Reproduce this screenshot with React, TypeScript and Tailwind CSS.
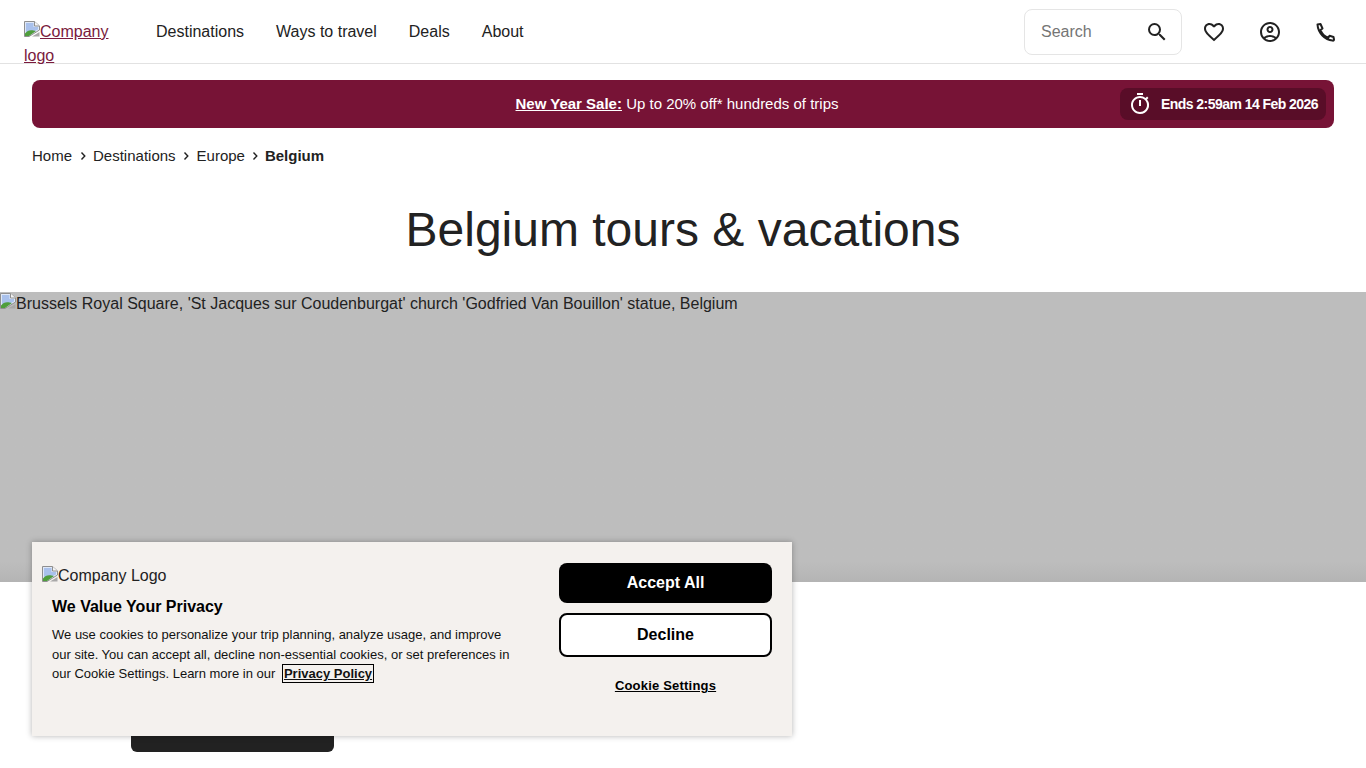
import React from "react";
import { MdOutlineSearch, MdFavoriteBorder, MdOutlineAccountCircle, MdOutlineTimer } from "react-icons/md";

const font = "font-['Liberation_Sans',Arial,sans-serif]";

function BrokenImage({ className = "align-baseline" }: { className?: string }) {
  return (
    <svg viewBox="0 0 16 16" className={`inline-block w-4 h-4 ${className}`}>
      <path d="M0.5 15.5V0.5H10.5L15.5 5V9L5 15.5Z" fill="#dfe8f7" stroke="#8f8f8f" />
      <path d="M10.5 0.5V5H15.5" fill="#f4f4f4" stroke="#8f8f8f" />
      <path d="M2 2H9.5V6H14V8.5L2 14Z" fill="#a9c1ec" />
      <path d="M1 15V12.5C3 9.5 6.5 8.5 9.5 9.5L12 10L5 15Z" fill="#4f9e3c" />
      <path d="M8 15.5L15.5 11V15.5Z" fill="#a8a8a8" />
    </svg>
  );
}

function Chevron({ last = false }: { last?: boolean }) {
  return (
    <svg viewBox="0 0 8 10" className={`w-2 h-2.5 ml-[6.5px] shrink-0 ${last ? "mr-[5.5px]" : "mr-[6.5px]"}`} fill="none" stroke="#222" strokeWidth="1.4">
      <path d="M2.5 1.5L5.8 5L2.5 8.5" />
    </svg>
  );
}

function PhoneIcon() {
  return (
    <svg viewBox="0 0 24 24" className="w-6 h-6 -translate-x-px" fill="none" stroke="#1f1f1f" strokeWidth="2" strokeLinejoin="round" strokeLinecap="round">
      <path d="M4.5 4.5L7.5 4L9.5 8.5L7.5 10C9 14 12 16.5 15.5 17.5L16.5 15.8L20.5 17L21 19.5Q21 21 19.5 20.6C12 20 5 13 4.5 4.5Z" />
    </svg>
  );
}

export default function App() {
  return (
    <div className={`${font} relative h-screen overflow-hidden bg-white text-[#222]`}>
      <header className="h-16 border-b border-[#e2e2e2] flex items-center pl-6 pr-7">
        <a href="#" className="w-[100px] text-[#7a1a3d] underline leading-6 mt-5 self-start">
          <BrokenImage />Company logo
        </a>
        <nav className="flex gap-8 ml-8">
          <a href="#">Destinations</a>
          <a href="#">Ways to travel</a>
          <a href="#">Deals</a>
          <a href="#">About</a>
        </nav>
        <div className="ml-auto flex items-center gap-8">
          <div className="w-[158px] h-[46px] -mr-3 border border-[#e5e5e5] rounded-lg flex items-center justify-between pl-4 pr-3">
            <span className="text-[#757575]">Search</span>
            <MdOutlineSearch className="w-6 h-6 text-[#222]" />
          </div>
          <MdFavoriteBorder className="w-6 h-6" />
          <MdOutlineAccountCircle className="w-6 h-6" />
          <PhoneIcon />
        </div>
      </header>

      <div className="mx-8 mt-4 h-12 rounded-lg bg-[#771336] text-white flex items-center relative">
        <p className="flex-1 text-center text-[15px] pr-[12px]">
          <a href="#" className="font-bold underline">New Year Sale:</a> Up to 20% off* hundreds of trips
        </p>
        <div className="absolute right-2 top-2 h-8 w-[206px] rounded-lg bg-[#590d28] flex items-center pl-2 gap-[9px] text-[14px] font-bold tracking-[-0.55px]">
          <MdOutlineTimer className="w-6 h-6 shrink-0" />
          <span>Ends 2:59am 14 Feb 2026</span>
        </div>
      </div>

      <nav className="mx-8 mt-[18px] h-5 flex items-center text-[15px] leading-5">
        <a href="#">Home</a>
        <Chevron />
        <a href="#">Destinations</a>
        <Chevron />
        <a href="#">Europe</a>
        <Chevron last />
        <span className="font-bold">Belgium</span>
      </nav>

      <h1 className="mt-8 h-16 text-center text-[48px] leading-[64px] font-normal">Belgium tours &amp; vacations</h1>

      <div className="mt-[30px] h-[290px] bg-gradient-to-b from-[#bdbdbd] from-[93%] to-[#b4b4b4] leading-6">
        <BrokenImage />Brussels Royal Square, 'St Jacques sur Coudenburgat' church 'Godfried Van Bouillon' statue, Belgium
      </div>

      <div className="pl-[131px] mt-[122px]">
        <div className="w-[203px] h-12 bg-[#222] rounded-md" />
      </div>

      <div className="absolute left-8 bottom-8 w-[760px] h-[194px] bg-[#f4f1ee] shadow-[0_0_6px_rgba(0,0,0,0.3)] flex">
        <div className="w-[527px] pl-[10px] pt-[22px] text-black">
          <div className="text-[#222] leading-6"><BrokenImage className="align-[-1px]" />Company Logo</div>
          <h2 className="pl-[10px] mt-[7px] font-bold leading-6">We Value Your Privacy</h2>
          <p className="pl-[10px] mt-[6px] w-[480px] text-[13px] leading-[19.5px] text-[#111]">
            We use cookies to personalize your trip planning, analyze usage, and improve our site. You can accept all, decline non-essential cookies, or set preferences in our Cookie Settings. Learn more in our{" "}
            <a href="#" className="ml-1 font-bold underline outline outline-1 outline-black px-px py-px">Privacy Policy</a>
          </p>
        </div>
        <div className="w-[213px] pt-[21px] flex flex-col">
          <button className="h-10 rounded-lg bg-black text-white font-bold">Accept All</button>
          <button className="h-11 mt-[10px] rounded-lg bg-white border-2 border-black text-black font-bold">Decline</button>
          <a href="#" className="mt-[19px] text-center text-[13px] font-bold underline tracking-[0.2px] text-black">Cookie Settings</a>
        </div>
      </div>
    </div>
  );
}
